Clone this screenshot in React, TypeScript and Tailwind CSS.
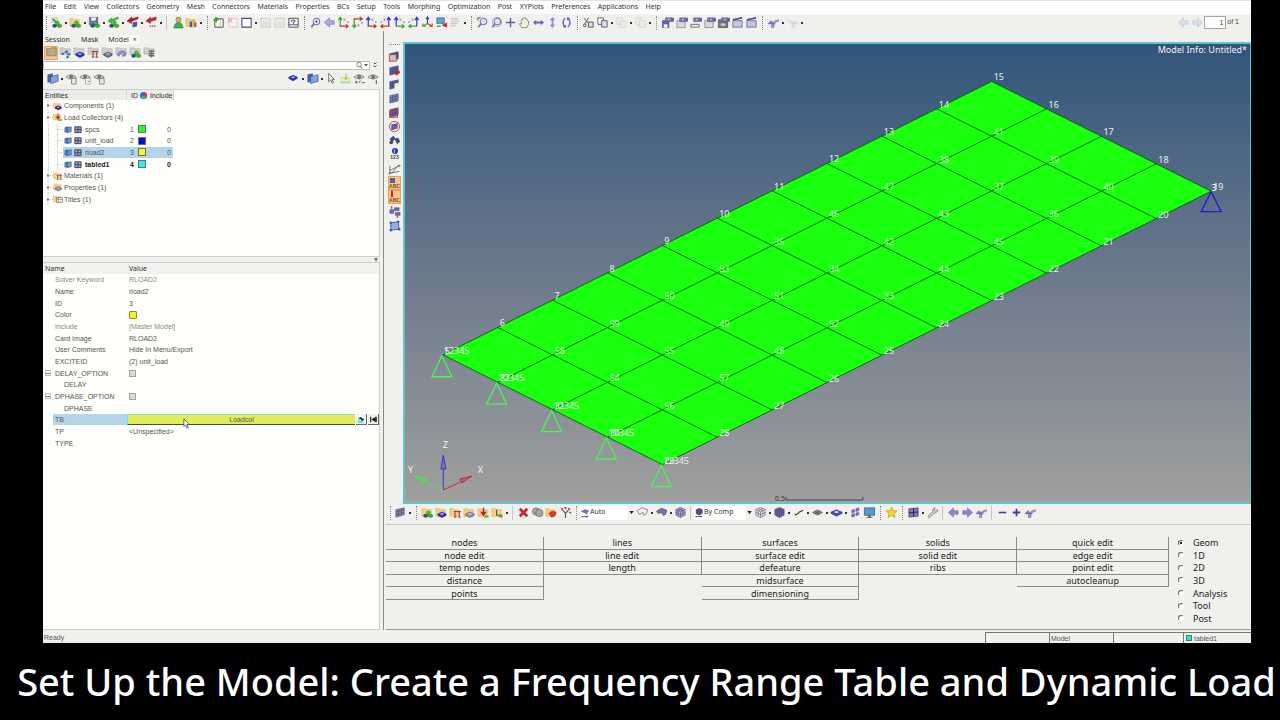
import { Fragment, ReactNode } from "react";

/* ---------- icon glyphs, all drawn on a 14x14 grid ---------- */

const Folder = () => (
  <path d="M1 3h4l1 1h5v7H1z" fill="#f3d087" stroke="#d9a94c" strokeWidth=".6" />
);
const GreyFolder = () => (
  <path d="M1 2h4l1 1h6v6H1z" fill="#cfcfcd" stroke="#a9a9a6" strokeWidth=".6" />
);
const Balls = () => (
  <g stroke="#1b6b1b" strokeWidth=".5">
    <circle cx="8" cy="7.5" r="2" fill="#44c934" />
    <ellipse cx="5" cy="10.5" rx="2.3" ry="1.8" fill="#3a3fae" />
    <ellipse cx="10.3" cy="10.6" rx="2.4" ry="1.8" fill="#3fb52e" />
  </g>
);
const Slab = ({ fill = "#2a2cc4" }: { fill?: string }) => (
  <g>
    <path d="M3 8.5l4.5-2 4.5 2v1.6l-4.5 2.4L3 10.1z" fill={fill} stroke="#1c1c70" strokeWidth=".5" />
    <path d="M5 8.6l2.5-1 2.5 1-2.5 1z" fill="#b9bbf4" />
  </g>
);
const Mesh = ({ fill = "#7d87c0" }: { fill?: string }) => (
  <g stroke="#3d4377" strokeWidth=".6">
    <path d="M2 4l9-2v7.500l-9 2.500z" fill={fill} />
    <path d="M5 3.400v7.800M8 2.700v7.800M2 6.700l9-2.400M2 9.300l9-2.400" fill="none" />
  </g>
);
const Cube = ({ fill = "#7d7fb8" }: { fill?: string }) => (
  <g stroke="#43456b" strokeWidth=".6" strokeLinejoin="round">
    <path d="M7 1.500l5 2.300v6L7 12.500l-5-2.700v-6z" fill={fill} />
    <path d="M2 3.800l5 2.400 5-2.400M7 6.200v6.300M4.500 2.600l5 2.500v6M9.500 2.600l-5 2.500v6M2 6.800L7 9.400l5-2.600" fill="none" />
  </g>
);
const Axes = ({ a, b, flip }: { a: string; b: string; flip?: boolean }) => (
  <g fill="none" strokeWidth="1.300" transform={flip ? "translate(14 0) scale(-1 1)" : undefined}>
    <path d="M3.500 11V2.500M1.500 4.500l2-3 2 3" stroke={a} />
    <path d="M3 11h9M9.500 9l2.500 2-2.500 2" stroke={b} />
    <path d="M7 2.500l2 3M9 2.500l-2 3M11 5.500l1.500 2M12.500 5.500L11 7.500" stroke="#777" strokeWidth=".6" />
  </g>
);
const Magnifier = () => (
  <g fill="none" stroke="#7175a8">
    <circle cx="8" cy="6" r="3.500" fill="#dfe1f3" strokeWidth="1.100" />
    <path d="M5.500 8.500L2.500 12" strokeWidth="1.800" />
  </g>
);
const Eye = () => (
  <g stroke="#6f6f6c" strokeWidth=".8">
    <path d="M1 5.500q5-5 11 0q-5.500 4-11 0z" fill="#dededc" />
    <circle cx="6.700" cy="5.200" r="1.800" fill="#767672" />
  </g>
);
const Undo = () => (
  <g>
    <path d="M4.500 12.500q0-7.500 8-8.500v1.600q-5.500 1.200-5 6.900z" fill="#9a9bd0" stroke="#5557a0" strokeWidth=".4" />
    <path d="M1 8.500L4 5l4.500 3.500z" fill="#7a7bbd" stroke="#5557a0" strokeWidth=".4" />
  </g>
);
const Arrow = ({ fill = "#8a8bc0", right }: { fill?: string; right?: boolean }) => (
  <path
    d="M1.500 7L7 2v3h5v4H7v3z"
    fill={fill}
    stroke="#66679a"
    strokeWidth=".6"
    transform={right ? "translate(14 0) scale(-1 1)" : undefined}
  />
);
const Camera = () => (
  <g stroke="#4c4e86" strokeWidth=".6">
    <path d="M5 2h7v4H5z" fill="#7a7dbd" />
    <circle cx="8.500" cy="4" r="1.200" fill="#e9e9fb" />
    <path d="M12 3l1.500-1v4L12 5z" fill="#4c4e86" />
  </g>
);

const glyphs: Record<string, ReactNode> = {
  newModel: (
    <g>
      <path d="M2 2h6v5H2z" fill="#e4e4e0" stroke="#9a9a96" strokeWidth=".5" />
      <path d="M3 3l5 5" stroke="#35a82a" strokeWidth="2" />
      <Balls />
    </g>
  ),
  openModel: <g><Folder /><Balls /></g>,
  save: (
    <g>
      <path d="M1.500 1.500h9v8h-9z" fill="#6a74bd" stroke="#3d4377" strokeWidth=".6" />
      <path d="M3.500 1.500h5v3.500h-5z" fill="#eef" />
      <Balls />
    </g>
  ),
  importModel: (
    <g>
      <path d="M12 1L5 4 5 2 1 5.500 5 8V6l7-3z" fill="#3cc22e" stroke="#207a18" strokeWidth=".5" />
      <Balls />
    </g>
  ),
  importGeom: (
    <g>
      <path d="M13 1L6 3 6 1 1 5.500 6 8V6l7-3z" fill="#b5232b" stroke="#6d1519" strokeWidth=".5" />
      <path d="M7 7l5-1v5l-5 1.500z" fill="#55578e" />
    </g>
  ),
  ppt: (
    <g>
      <path d="M12 1L6 3 6 1 1 5.500 6 8V6l6-2z" fill="#c4283a" stroke="#7b1a22" strokeWidth=".5" />
      <path d="M5 11h7" stroke="#555" strokeWidth="1.400" strokeDasharray="1.500 .8" />
    </g>
  ),
  user: (
    <g>
      <circle cx="8" cy="4" r="2.800" fill="#e0a877" stroke="#8a5a2d" strokeWidth=".5" />
      <path d="M5.500 3q2.500-3 5 0l-1-1.500h-3z" fill="#4c3117" />
      <path d="M3 13q.500-6 5-6t5 6z" fill="#36b14b" stroke="#1b6b2c" strokeWidth=".5" />
    </g>
  ),
  chart: (
    <g>
      <Folder />
      <path d="M5 6h2.500v6H5z" fill="#3257c4" />
      <path d="M7.500 4H10v8H7.500z" fill="#e6b72c" />
      <path d="M10 7h2.300v5H10z" fill="#7d5fb3" />
    </g>
  ),
  pagePlus: (
    <g>
      <path d="M3 3h9v9H3z" fill="#fff" stroke="#444" />
      <path d="M9 3v9" stroke="#888" strokeWidth=".6" />
      <path d="M4.500 1v6M1.500 4h6" stroke="#35a82a" strokeWidth="1.800" />
    </g>
  ),
  pageCut: (
    <g opacity=".35">
      <path d="M3 3h9v9H3z" fill="#fff" stroke="#888" />
      <path d="M2 2l5 5M7 2L2 7" stroke="#d33" strokeWidth="1.300" />
    </g>
  ),
  page: <path d="M2 2.500h10v9.500H2z" fill="#fff" stroke="#4a4f78" strokeWidth="1.200" />,
  pageFaint: (
    <g opacity=".3">
      <path d="M2 2.500h10v9.500H2z" fill="#e5e5e5" stroke="#777" />
      <path d="M4 6h6v4H4z" fill="#bbb" />
    </g>
  ),
  pageHelp: (
    <g>
      <path d="M2 2.500h10v9.500H2z" fill="#fff" stroke="#444" />
      <path d="M2 9.500h10M5 6.500V4.500h3.500v2H7V8.500" stroke="#3d4377" fill="none" />
    </g>
  ),
  zoom: <g><Magnifier /><path d="M6.500 6h3M8 4.500v3" stroke="#555" strokeWidth=".8" /></g>,
  zoomFit: <g><Magnifier /><path d="M2 2h3M2 2v3" stroke="#444" /></g>,
  zoomBack: <g><circle cx="7.500" cy="6.500" r="5" fill="none" stroke="#a4a6c9" /><Magnifier /></g>,
  back: <Arrow fill="#a9abdf" />,
  arrowL: <Arrow />,
  arrowR: <Arrow right />,
  axXY: <Axes a="#3aa62e" b="#c33" />,
  axYX: <g transform="translate(0 14) scale(1 -1)"><Axes a="#3aa62e" b="#c33" /></g>,
  axZX: <Axes a="#3437c9" b="#c33" />,
  axXZ: <Axes a="#3437c9" b="#c33" flip />,
  axZY: <Axes a="#3437c9" b="#3aa62e" />,
  axYZ: <Axes a="#3437c9" b="#3aa62e" flip />,
  axIso: (
    <g fill="none" strokeWidth="1.200">
      <path d="M7 8V1.500M5.500 3.500L7 1l1.500 2.500" stroke="#3437c9" />
      <path d="M7 8l5 3M12 8v3H9" stroke="#c33" />
      <path d="M7 8l-5 3M2 8v3h3" stroke="#3aa62e" />
    </g>
  ),
  screenSave: (
    <g>
      <path d="M2 2h8v6H2z" fill="#58a6da" stroke="#33597a" strokeWidth=".7" />
      <path d="M12 12L7 10l2-1 4-2v5z" fill="#c92a35" />
      <path d="M2 11h4" stroke="#3aa62e" strokeWidth="1.500" />
    </g>
  ),
  linesFaint: <path d="M2 3h8M2 5.500h9M2 8h7M2 10.500h5" stroke="#c9c9c6" strokeWidth="1.500" />,
  plus: <path d="M7 2v10M2 7h10" stroke="#5a5da6" strokeWidth="1.500" />,
  minus: <path d="M3 7h8" stroke="#3e4190" strokeWidth="1.700" />,
  plusBold: <path d="M7 3v8M3 7h8" stroke="#3e4190" strokeWidth="1.900" />,
  hand: (
    <path
      d="M4 12.500L1.500 8.500q1-1 2 .3V4q.9-1 1.500 0V2.500q.9-1 1.600 0V2q1-1 1.600 0v1q1-.8 1.600.2V5q1-.6 1.500.3V9l-1.500 3.500z"
      fill="#f2ede0"
      stroke="#77756c"
      strokeWidth=".8"
    />
  ),
  leftRight: <path d="M1 7l3.500-3v2h5V4L13 7l-3.500 3V8h-5v2z" fill="#6568b2" />,
  upDown: <path d="M7 1l3 3.500H8v5h2L7 13l-3-3.500h2v-5H4z" fill="#8f91cb" />,
  rotate: (
    <g fill="none" stroke="#6568b2" strokeWidth="1.400">
      <path d="M5.500 2q-4.500 5 0 10M8.500 12q4.500-5 0-10" />
      <path d="M3.500 10.500l2 1.500.500-2.500M10.500 3.500L8.500 2 8 4.500" />
    </g>
  ),
  cut: (
    <g stroke="#555">
      <path d="M2 2l6 7M7 2L3 9" fill="none" />
      <path d="M7 6.500h5v5.500H7z" fill="#d9dbee" />
      <circle cx="3" cy="10" r="1.500" fill="none" />
    </g>
  ),
  copy: (
    <g fill="#f6f6fb" stroke="#555" strokeWidth=".9">
      <path d="M2 2h6v7H2z" />
      <path d="M6 5h6v7H6z" fill="#d9dbee" />
    </g>
  ),
  copyFaint: (
    <g fill="#ededeb" stroke="#d2d2cf" strokeWidth=".9">
      <path d="M2 2h6v7H2z" />
      <path d="M6 5h6v7H6z" />
    </g>
  ),
  camSave: <g><path d="M1.500 5h7v7.500h-7z" fill="#5d63b5" stroke="#3d4377" strokeWidth=".6" /><path d="M3 9h4v3.500H3z" fill="#fff" /><Camera /></g>,
  camPage: <g><path d="M2 5h9v7.500H2z" fill="#d8d8da" stroke="#777" strokeWidth=".7" /><Camera /></g>,
  camBar: <g><path d="M2 9h9v3H2z" fill="#e7e7e7" stroke="#555" strokeWidth=".8" /><Camera /></g>,
  camDark: <g><path d="M1.500 4h10v8.500h-10z" fill="#77777c" stroke="#444" strokeWidth=".7" /><path d="M4 8h5v2.500H4z" fill="#ccc" /><Camera /></g>,
  film: <g><path d="M2 5h10v7H2z" fill="#c5c6da" stroke="#5b5c84" strokeWidth=".8" /><path d="M2 4l10-2" stroke="#4c4e86" strokeWidth="1.800" /></g>,
  undo: <Undo />,
  undoFaint: <g opacity=".2" transform="translate(14 0) scale(-1 1)"><Undo /></g>,
  pageL: <g opacity=".35"><Arrow fill="#9fd0e0" /></g>,
  pageR: <g opacity=".35"><Arrow fill="#9fd0e0" right /></g>,

  viewFolder: <path d="M2 3h3.500l1-1H12v8.500H2z" fill="#b9a98f" stroke="#80725a" strokeWidth=".7" />,
  gLinks: <g><GreyFolder /><path d="M4 8l4-2 3 3M8 6l2 6" stroke="#4d83c2" fill="none" /><g fill="#3a6fb8"><circle cx="4" cy="8.500" r="1.300" /><circle cx="8" cy="6" r="1.300" /><circle cx="11" cy="9" r="1.300" /><circle cx="9" cy="12" r="1.300" /></g></g>,
  gComp: <g><GreyFolder /><Slab /></g>,
  gMat: <g><GreyFolder /><path d="M5 6h7M6.500 6v6M10.500 6v6M5 12h3M9 12h3" stroke="#a6282e" /></g>,
  gProp: <g><GreyFolder /><Slab fill="#777774" /></g>,
  gShell: <g><GreyFolder /><path d="M2.500 10q.5-4.500 5-4.500t4.500 3-4 2.500l.5-1.500q2 0 1.800-1.200T7.500 7.500 4.500 11z" fill="#9a9bd2" stroke="#5b5c98" strokeWidth=".6" /></g>,
  gBalls: <g><GreyFolder /><Balls /></g>,
  gSystem: <g><GreyFolder /><path d="M6 5.500h6M6 8h6M6 10.500h6" stroke="#62625f" strokeWidth="1.500" /><path d="M9 4.500v8" stroke="#62625f" /></g>,
  comp: <g><Folder /><Slab /></g>,
  balls: <g><Folder /><Balls /></g>,
  mat: <g><Folder /><path d="M5 6h8M6.500 6v6M11 6v6M5.500 12H8M10 12h2.500" stroke="#a6282e" /></g>,
  prop: <g><Folder /><Slab fill="#9a9a92" /></g>,
  title: <g><Folder /><path d="M5 5h8v7H5z" fill="#f5f5ef" stroke="#555" strokeWidth=".8" /><path d="M5 7.500h8M7.500 5v7" stroke="#555" strokeWidth=".7" /></g>,
  load: <g><Folder /><path d="M7 2v7M5 7l2 3 2-3z" stroke="#c8201f" fill="#c8201f" strokeWidth="1.500" /><path d="M7.500 10h5v2.500h-5z" fill="#55c531" /></g>,
  system: <g><Folder /><path d="M6 4v6h5" stroke="#555" fill="none" strokeWidth="1.200" /><path d="M8.500 9h4v3.500h-4z" fill="#65a832" /></g>,
  meshBlue: <g><path d="M2 3l5-1v8l-5 1z" fill="#4e65b0" stroke="#2f3e80" strokeWidth=".6" /><path d="M5 5l8-2v7l-8 2.500z" fill="#82a6dc" stroke="#2f4d90" strokeWidth=".7" /></g>,
  mesh: <Mesh />,
  meshGrey: <Mesh fill="#8b8d9c" />,
  slab: <g transform="translate(-1 -3)"><Slab /></g>,
  cursor: <path d="M4 1.500v9l2.200-2 1.600 3.500 1.400-.7-1.600-3.300H10z" fill="#fff" stroke="#444" strokeWidth=".8" />,
  pick: <g><path d="M2 6h10v6H2z" fill="#f4ef9a" stroke="#b9ce7a" strokeWidth=".5" /><path d="M2 11h10" stroke="#7fd3ea" strokeWidth="1.400" /><path d="M7.500 2v6M5.500 6l2 2 2-2" stroke="#7fbd50" fill="none" /></g>,
  eyeBox: <g><Eye /><path d="M7 7h5v6H7z" fill="#e6e6e4" stroke="#777" strokeWidth=".8" /></g>,
  eyePage: <g><Eye /><path d="M7 7h5v6H7z" fill="#fff" stroke="#999" strokeWidth=".8" /><path d="M9 10h2" stroke="#666" /></g>,
  eyePlus: <g><Eye /><path d="M2 11h3M3.500 9.500v3M6 12l2-3M9 11.500h4" stroke="#555" strokeWidth=".9" /></g>,
  eyeOne: <g><Eye /><path d="M10 9v4" stroke="#555" strokeWidth="1.100" /></g>,

  maskCube: <g><Mesh fill="#4d4f78" /><path d="M1.500 5h7.500v7H1.500z" fill="#f4dede" fillOpacity=".8" stroke="#c43a46" /></g>,
  maskRed: <g><Mesh fill="#5c6098" /><path d="M5 8l4 1 3-2.500 1 3-4 3z" fill="#cf2430" /></g>,
  maskHalf: <g><Mesh fill="#5c6098" /><path d="M7 6l5-1v6l-5 1z" fill="#ededec" /></g>,
  maskRect: <g><Mesh fill="#5c6098" /><path d="M2 6h8v6H2z" fill="none" stroke="#c43a46" strokeWidth="1.200" /></g>,
  maskCircle: <g><circle cx="7" cy="7" r="5.500" fill="#f6e4e6" stroke="#c43a46" /><path d="M4 5l6-1v5l-6 1.500z" fill="#5c6098" stroke="#3d4377" strokeWidth=".6" /></g>,
  find: <g fill="#3f4779"><path d="M2 5l4-3 2 3-4 4z" /><path d="M7 5l4-1 2 4-3 3z" /><circle cx="3.500" cy="9" r="2" /></g>,
  unlink: <g fill="none" stroke="#666" strokeWidth=".9"><path d="M2 3v8l10-2M2 8l10-5M4 11l6-7" /><circle cx="12" cy="3" r="1" /><circle cx="2" cy="11" r="1" /></g>,
  arrange: <g><path d="M2 5h4v4H2zM7 3h5v3H7zM8 8h5v3H8z" fill="#6d71b4" stroke="#3d4377" strokeWidth=".6" /><path d="M4 1v3M10 11v3" stroke="#c8201f" strokeWidth="1.200" /></g>,
  patch: <g><path d="M3 4l8-1 1 8-9 1z" fill="#8fb2e2" stroke="#3c5fa5" /><g fill="#3c5fa5"><circle cx="3" cy="4" r="1.400" /><circle cx="11" cy="3" r="1.400" /><circle cx="12" cy="11" r="1.400" /><circle cx="3" cy="12" r="1.400" /></g></g>,

  redX: <path d="M3 3l8 8M11 3l-8 8" stroke="#cf1f36" strokeWidth="3" />,
  greyBalls: <g stroke="#555" strokeWidth=".6" fill="#a8a8a5"><circle cx="5.500" cy="6" r="4" /><circle cx="9" cy="7.500" r="4" /></g>,
  folderRed: <g><Folder /><path d="M4 8q4-4 8-1-1 5-5 5z" fill="#d93a24" stroke="#8c1f14" strokeWidth=".5" /></g>,
  branch: <g fill="none" stroke="#555"><path d="M7 13V8L3.500 4M7 8l3.500-4" strokeWidth="1.200" /><path d="M2 3h2M10 3h2M6 2h2M11 7h2" stroke="#c8201f" strokeWidth="1.800" /></g>,
  autoColor: <g><path d="M1.500 5l5-3 6 2-2 2-1 3-2-2z" fill="#777ab0" stroke="#4c4e86" strokeWidth=".6" /><path d="M2 12h3" stroke="#c8201f" strokeWidth="1.800" /><path d="M5 12h3" stroke="#3aa62e" strokeWidth="1.800" /><path d="M8 12h3" stroke="#3437c9" strokeWidth="1.800" /></g>,
  compColor: <g><g transform="translate(1 -1) scale(.9)"><Cube fill="#5c5e80" /></g><path d="M2 12h3" stroke="#c8201f" strokeWidth="1.800" /><path d="M5 12h3" stroke="#3aa62e" strokeWidth="1.800" /><path d="M8 12h3" stroke="#3437c9" strokeWidth="1.800" /></g>,
  wireSurf: <path d="M1.500 5l5-3 6 2-1 4-3 2-1-3-4 2z" fill="#f5f5f4" stroke="#777" strokeWidth=".9" />,
  fillSurf: <path d="M1.500 6l5-3.500 6 2-1 4.500-3 1-1-3-4 1z" fill="#7376ac" stroke="#4c4e86" strokeWidth=".8" />,
  cube: <Cube fill="#a9abdc" />,
  cubeWire: <Cube fill="#efefee" />,
  cubeFill: <Cube fill="#6467a5" />,
  line: <path d="M3 9.500l3-1 2-2 4-2" fill="none" stroke="#444" strokeWidth="1.300" />,
  flat: <g><path d="M1.500 7L7 4l5.500 3L7 10z" fill="#868683" stroke="#555" strokeWidth=".6" /><path d="M4 5.700l5.500 2.800M9.500 5.700L4 8.500" stroke="#444" strokeWidth=".6" /></g>,
  slabWide: <g><path d="M1 6.500L7 4l6 2.500v1.500l-6 3-6-3z" fill="#4548b8" stroke="#2c2e80" strokeWidth=".5" /><path d="M4 6.500L7 5.300l3 1.200L7 7.800z" fill="#e5e6fb" /></g>,
  shrink: <g fill="#7578b6" stroke="#4c4e86" strokeWidth=".5"><path d="M3 4.500l3-1v3l-3 1zM7.500 3l3-1v3l-3 1zM3 9l3-1v3l-3 1zM7.500 7.500l3-1v3l-3 1z" /></g>,
  monitor: <g><path d="M1.500 2h11v8h-11z" fill="#4f9ad6" stroke="#555" strokeWidth=".8" /><path d="M5.500 10h3v2h2v1h-7v-1h2z" fill="#666" /></g>,
  star: <path d="M7 1l1.700 4 4.300.4-3.300 2.800 1 4.300L7 10.200l-3.700 2.300 1-4.300L1 5.400 5.300 5z" fill="#f5d321" stroke="#b8931a" strokeWidth=".7" />,
  quad: <g><path d="M2 3l10-1v9l-10 1z" fill="#777ab4" stroke="#3d4377" strokeWidth=".7" /><path d="M7 2.500v9M2 7.500l10-1" stroke="#25294f" /></g>,
  wrench: <path d="M2 11l5-5q-.5-3.500 3-4.200L9 4l1.500 1.200 2-1.700q.5 3.500-3.500 4L4 12.500q-1.800.3-2-1.500z" fill="#c9c9c7" stroke="#777" strokeWidth=".7" />,
};

function Glyph({ name }: { name: string }) {
  return (
    <svg viewBox="0 0 14 14" className="size-[13px] shrink-0" fill="none">
      {glyphs[name]}
    </svg>
  );
}

function IconButton({ name, active }: { name: string; active?: boolean }) {
  return (
    <button
      type="button"
      aria-label={name}
      className={`flex h-[14px] w-[14px] shrink-0 items-center justify-center ${active ? "border border-[#e0ac70] bg-[#f5c48d]" : ""}`}
    >
      <Glyph name={name} />
    </button>
  );
}

const Caret = () => (
  <span className="flex w-[5px] shrink-0 justify-center">
    <span className="size-[2px] bg-[#333]" />
  </span>
);
const Grip = () => (
  <span className="flex w-[8px] shrink-0 justify-center">
    <span className="h-[14px] border-l border-dotted border-[#8b8b88]" />
  </span>
);
const Divider = () => (
  <span className="flex w-[7px] shrink-0 justify-center">
    <span className="h-[14px] border-l border-[#c6c6c3]" />
  </span>
);

/* "." caret, ":" grip, "|" divider, anything else is a glyph name */
function IconRow({ items }: { items: string }) {
  return (
    <div className="flex shrink-0 items-center">
      {items.split(" ").map((item, i) => {
        if (item === ".") return <Caret key={i} />;
        if (item === ":") return <Grip key={i} />;
        if (item === "|") return <Divider key={i} />;
        return <IconButton key={i} name={item} />;
      })}
    </div>
  );
}

const menus = [
  "File", "Edit", "View", "Collectors", "Geometry", "Mesh", "Connectors", "Materials", "Properties", "BCs",
  "Setup", "Tools", "Morphing", "Optimization", "Post", "XYPlots", "Preferences", "Applications", "Help",
];

function MenuBar() {
  return (
    <nav className="h-[14px] shrink-0 border-t border-[#e3e3df] bg-white pl-[2px] font-['Noto_Sans',sans-serif] text-[7px] text-[#333]">
      <div className="flex h-full w-[616px] items-center justify-between">
        {menus.map((m) => (
          <button key={m} type="button">{m}</button>
        ))}
      </div>
    </nav>
  );
}

function TopToolbar() {
  return (
    <div className="flex h-[17px] shrink-0 items-center">
      <span className="-mx-px flex"><Grip /></span>
      <IconRow items="newModel . openModel . save . importModel . importGeom . ppt . | user chart . : pagePlus pageCut page . pageFaint pageFaint pageHelp : zoom back axXY axYX axZX axXZ axZY axYZ axIso screenSave linesFaint . : zoomFit zoomBack plus hand leftRight upDown rotate : cut copy . copyFaint . copyFaint . : camSave camPage camBar camPage camDark film film : undo . undoFaint ." />
      <div className="ml-auto flex items-center pr-[12px] text-[7px] text-[#444]">
        <IconRow items="pageL pageR" />
        <input aria-label="Page" defaultValue="1" className="h-[13px] w-[22px] border border-[#a5a5a2] bg-white pr-[2px] text-right" />
        <span className="pl-px">of 1</span>
      </div>
    </div>
  );
}

/* ---------- model browser ---------- */

interface TreeRow {
  name: string;
  icon?: string;
  id?: number;
  swatch?: string;
  selected?: boolean;
  bold?: boolean;
}

const tree: TreeRow[] = [
  { name: "Components (1)", icon: "comp" },
  { name: "Load Collectors (4)", icon: "load" },
  { name: "spcs", id: 1, swatch: "bg-[#1fff1f]" },
  { name: "unit_load", id: 2, swatch: "bg-[#0b0bd8]" },
  { name: "rload2", id: 3, swatch: "bg-[#fdf51c]", selected: true },
  { name: "tabled1", id: 4, swatch: "bg-[#27f0ee]", bold: true },
  { name: "Materials (1)", icon: "mat" },
  { name: "Properties (1)", icon: "prop" },
  { name: "Titles (1)", icon: "title" },
];

function EntityTree() {
  return (
    <div className="h-[168px] shrink-0 border border-l-0 border-[#cfcfcc] bg-[#fefefb]">
      <table className="h-[115px] table-fixed border-collapse">
        <thead>
          <tr className="h-[10px] bg-[#ececea] text-left text-[#333]">
            <th className="w-[83px] border-r border-[#d4d4d1] p-0 pl-[2px] font-normal">Entities</th>
            <th className="w-[12px] p-0 text-right font-normal">ID</th>
            <th className="w-[10px] p-0" aria-label="Color">
              <svg viewBox="0 0 8 8" className="mx-auto size-[7px]">
                <circle cx="4" cy="4" r="4" fill="#2f62d8" />
                <path d="M4 4V0a4 4 0 0 1 3.500 6z" fill="#d93a4d" />
                <path d="M4 4l3.500 2A4 4 0 0 1 .5 6z" fill="#3dc04b" />
              </svg>
            </th>
            <th className="w-[25px] border-r border-[#d4d4d1] p-0 text-right font-normal">Include</th>
          </tr>
        </thead>
        <tbody>
          {tree.map((row) => {
            const hl = row.selected ? "bg-[#b4d4e9]" : "";
            return (
              <tr key={row.name} className={row.bold ? "font-bold text-[#222]" : ""}>
                <td className="p-0">
                  {row.icon ? (
                    <div className="flex h-[11px] items-center">
                      <svg viewBox="0 0 10 11" className="h-[11px] w-[10px]">
                        <path d="M5 0v11M5 5.500h5" stroke="#c4c4c0" strokeDasharray="1 1" fill="none" />
                        <path d="M4 4.500h2v2H4z" fill="#777" />
                      </svg>
                      <svg viewBox="0 0 14 14" className="size-[10px]">{glyphs[row.icon]}</svg>
                      <span className="whitespace-nowrap pl-px">{row.name}</span>
                    </div>
                  ) : (
                    <div className="flex h-[11px] items-center pl-[5px]">
                      <svg viewBox="0 0 15 11" className="h-[11px] w-[15px]">
                        <path d="M.5 0v11M9.500 0v11M9.500 5.500H15" stroke="#c4c4c0" strokeDasharray="1 1" fill="none" />
                      </svg>
                      <span className={`flex h-full flex-1 items-center ${hl}`}>
                        <svg viewBox="0 0 22 10" className="h-[9px] w-[20px]">
                          <path d="M2 3l3-1v5l-3 1zM4 3l5-1v5.500l-5 1z" fill="#6f9bdc" stroke="#2f4d90" strokeWidth=".7" />
                          <path d="M13 2h7v6.500h-7zM16.500 2v6.500M13 5.200h7" fill="#a5a6bd" stroke="#3a3b5c" />
                        </svg>
                        <span className="pl-[2px]">{row.name}</span>
                      </span>
                    </div>
                  )}
                </td>
                <td className={`p-0 pr-[4px] text-right ${hl}`}>{row.id}</td>
                <td className={`p-0 ${hl}`}>
                  {row.swatch && <span className={`block size-[8px] border border-[#66756a] ${row.swatch}`} />}
                </td>
                <td className={`p-0 pr-[2px] text-right ${hl}`}>{row.id && 0}</td>
              </tr>
            );
          })}
        </tbody>
      </table>
    </div>
  );
}

interface PropRow {
  name: string;
  value?: ReactNode;
  dim?: boolean;
  option?: boolean;
  child?: boolean;
}

const props: PropRow[] = [
  { name: "Solver Keyword", value: "RLOAD2", dim: true },
  { name: "Name", value: "rload2" },
  { name: "ID", value: "3" },
  { name: "Color", value: <span className="block size-[8px] rounded-[1px] border border-[#8c8a2e] bg-[#f4ee2b]" /> },
  { name: "Include", value: "[Master Model]", dim: true },
  { name: "Card Image", value: "RLOAD2" },
  { name: "User Comments", value: "Hide In Menu/Export" },
  { name: "EXCITEID", value: "(2) unit_load" },
  { name: "DELAY_OPTION", option: true },
  { name: "DELAY", child: true },
  { name: "DPHASE_OPTION", option: true },
  { name: "DPHASE", child: true },
  { name: "TB" },
  { name: "TP", value: "<Unspecified>" },
  { name: "TYPE" },
];

function LoadcolPicker() {
  return (
    <div className="relative -ml-[2px] flex h-[11px] gap-px">
      <button type="button" className="flex-1 border-b border-l border-t border-b-[#2f5f35] border-l-[#6fe0d8] border-t-[#8fdcb8] bg-[#e2eb5c] leading-[9px]">
        Loadcol
      </button>
      <button type="button" aria-label="Create" className="w-[11px] border-b border-r border-[#666] bg-[#f0f0ee]">
        <svg viewBox="0 0 11 10" className="h-[9px] w-[10px]">
          <path d="M2 5h6v4H2z" fill="#5fe0ee" />
          <path d="M3 4q3-3 4 1M5.500 4.500h3L7 6.500z" fill="#222" stroke="#222" strokeWidth=".7" />
        </svg>
      </button>
      <button type="button" aria-label="Reset" className="w-[11px] border-b border-r border-[#666] bg-[#f0f0ee]">
        <svg viewBox="0 0 11 10" className="h-[9px] w-[10px]">
          <path d="M3 2v6M9 2v6" stroke="#111" strokeWidth="1.300" />
          <path d="M8.500 2v6L4 5z" fill="#111" />
        </svg>
      </button>
      <svg viewBox="0 0 8 12" className="absolute left-[56px] top-[4px] h-[11px] w-[7px]">
        <path d="M1 .500v9l2-1.800 1.500 3.500 1.500-.7-1.500-3.300H7z" fill="#fff" stroke="#333" strokeWidth=".8" />
      </svg>
    </div>
  );
}

function PropertyTable() {
  return (
    <div className="min-h-0 flex-1 border border-l-0 border-[#cfcfcc] bg-[#fefefb]">
      <table className="h-[186px] w-full table-fixed border-collapse text-left">
        <thead>
          <tr className="h-[11px] bg-[#f1f1ef] font-['Noto_Sans',sans-serif] leading-[10px] text-[#333]">
            <th className="w-[86px] p-0 pl-[2px] font-normal">Name</th>
            <th className="p-0 font-normal">Value</th>
          </tr>
        </thead>
        <tbody>
          {props.map((p) => (
            <tr key={p.name} className={p.dim ? "text-[#8b8b88]" : ""}>
              <td className="p-0">
                <div className="flex h-[11px] items-center">
                  <span className="flex w-[10px] shrink-0 justify-center">
                    {p.option && (
                      <span className="flex size-[6px] items-center justify-center border border-[#bbb]">
                        <span className="h-px w-[4px] bg-[#777]" />
                      </span>
                    )}
                  </span>
                  <span className={`flex h-full flex-1 items-center ${p.child ? "pl-[11px]" : "pl-[2px]"} ${p.name === "TB" ? "bg-[#b4d4e9]" : ""}`}>
                    {p.option ? <label htmlFor={p.name}>{p.name}</label> : p.name}
                  </span>
                </div>
              </td>
              <td className="p-0">
                {p.option ? (
                  <input id={p.name} type="checkbox" className="block size-[7px] appearance-none border border-[#a2a29f] bg-[#d9d9d6]" />
                ) : p.name === "TB" ? (
                  <LoadcolPicker />
                ) : (
                  p.value
                )}
              </td>
            </tr>
          ))}
        </tbody>
      </table>
    </div>
  );
}

function ModelBrowser() {
  return (
    <aside className="flex w-[337px] shrink-0 flex-col text-[7px] leading-[9px] text-[#555]">
      <div className="flex h-[14px] items-end pb-px font-['Noto_Sans',sans-serif] text-[#333]">
        <button type="button" className="pl-[2px] pr-[11px]">Session</button>
        <button type="button" className="pr-[8px]">Mask</button>
        <button type="button" className="bg-[#fafaf8] px-[2px]">Model <span className="pl-[2px]">×</span></button>
      </div>
      <div className="flex h-[15px] items-center pl-px">
        <IconButton name="viewFolder" active />
        <IconRow items="gLinks gComp gMat gProp gShell gBalls gSystem" />
      </div>
      <div className="flex h-[10px] items-center">
        <div className="flex h-[9px] flex-1 items-center border border-[#bdbdba] bg-white">
          <input aria-label="Search" className="h-[7px] min-w-0 flex-1" />
          <svg viewBox="0 0 14 8" className="h-[8px] w-[14px]" fill="none" stroke="#555">
            <circle cx="4" cy="3.500" r="2.300" strokeWidth=".7" />
            <path d="M5.500 5.500L7 7.500" />
            <path d="M9 3h4l-2 2.500z" fill="#555" stroke="none" />
          </svg>
        </div>
        <svg viewBox="0 0 10 8" className="h-[8px] w-[10px]" fill="none" stroke="#555">
          <path d="M3.500 1.500l1.500 1.500 1.500-1.500M3.500 4.500L5 6l1.500-1.500" />
        </svg>
      </div>
      <div className="flex h-[19px] items-center justify-between pb-[2px] pl-[2px]">
        <IconRow items="meshBlue . eyeBox eyePage eyeBox" />
        <IconRow items="slab . meshBlue . cursor pick eyePlus eyeOne" />
      </div>
      <EntityTree />
      <div className="flex h-[5px] shrink-0 items-center justify-end pr-[2px]">
        <svg viewBox="0 0 4 4" className="size-[4px]"><path d="M0 0h4L2 4z" fill="#777" /></svg>
      </div>
      <PropertyTable />
    </aside>
  );
}

/* ---------- graphics area ---------- */

const COLS = 10;
const ROWS = 4;
const px = (i: number, j: number) => 442 + 55 * (i + j);
const py = (i: number, j: number) => 355.500 - 27.400 * i + 27.500 * j;

const nodeIds = [
  ["5", "6", "7", "8", "9", "10", "11", "12", "13", "14", "15"],
  ["32", "58", "59", "50", "53", "35", "46", "47", "38", "41", "16"],
  ["31", "54", "55", "49", "51", "34", "42", "43", "37", "39", "17"],
  ["30", "56", "57", "48", "52", "33", "44", "45", "36", "40", "18"],
  ["29", "28", "27", "26", "25", "24", "23", "22", "21", "20", "19"],
];

function Viewport() {
  const corners = [[0, 0], [COLS, 0], [COLS, ROWS], [0, ROWS]];
  return (
    <div className="min-h-0 min-w-0 flex-1 border-2 border-r border-[#5fc4cc] bg-linear-to-b from-[#30557a] via-[#6c798c] to-[#a0a09e]">
      <svg viewBox="405 44 845 459" className="size-full font-['Noto_Sans',sans-serif] text-[9px]">
        <polygon points={corners.map(([i, j]) => `${px(i, j)},${py(i, j)}`).join(" ")} fill="#1aff0d" />
        <g stroke="#0b5a10" strokeWidth=".9">
          {Array.from({ length: ROWS + 1 }, (_, j) => (
            <line key={j} x1={px(0, j)} y1={py(0, j)} x2={px(COLS, j)} y2={py(COLS, j)} />
          ))}
          {Array.from({ length: COLS + 1 }, (_, i) => (
            <line key={i} x1={px(i, 0)} y1={py(i, 0)} x2={px(i, ROWS)} y2={py(i, ROWS)} />
          ))}
        </g>
        <g fill="#e9efe9">
          {nodeIds.map((ids, j) =>
            ids.map((id, i) => (
              <text key={id} x={px(i, j) + 2} y={py(i, j) - 1} fill={i && j && i < COLS && j < ROWS ? "#c9f7c4" : undefined}>
                {id}
              </text>
            ))
          )}
        </g>
        {nodeIds.map((_, j) => (
          <Fragment key={j}>
            <path d={`M${px(0, j) - 1} ${py(0, j) + 1}l10 21h-20z`} fill="none" stroke="#4df25a" strokeWidth="1.300" />
            <text x={px(0, j) + 1} y={py(0, j) - 1} fill="#e9efe9">12345</text>
          </Fragment>
        ))}
        <path d="M1212 192l10 20h-20z" fill="none" stroke="#1c1ccc" strokeWidth="1.300" />
        <text x="1212" y="191" fill="#fff">3</text>

        <g fill="none">
          <path d="M442.500 491V470" stroke="#3a3ab8" />
          <path d="M442.500 456l-2.500 14h5z" stroke="#3232c8" fill="#3232c8" fillOpacity=".3" />
          <path d="M442.500 491l-17-8" stroke="#4ae64a" />
          <path d="M414 477l9 7 3-4z" stroke="#4ae64a" fill="#4ae64a" fillOpacity=".5" />
          <path d="M442.500 491l17-8" stroke="#c8283c" />
          <path d="M471 477l-12 3 2 4z" stroke="#c8283c" fill="#c8283c" fillOpacity=".5" />
        </g>
        <g fill="#f2f2f2">
          <text x="442" y="449">Z</text>
          <text x="407" y="474">Y</text>
          <text x="477" y="474">X</text>
        </g>
        <text x="775" y="502" fontSize="7" fill="#333">0.5</text>
        <path d="M786 498v3h77v-3" fill="none" stroke="#444" />
        <text x="1248" y="53" textAnchor="end" fill="#f2f2f2">Model Info: Untitled*</text>
      </svg>
    </div>
  );
}

function SideTools() {
  return (
    <div className="flex w-[17px] shrink-0 flex-col items-center pt-[2px]">
      <span className="mb-[4px] w-[11px] border-t border-dotted border-[#888]" />
      {["maskCube", "maskRed", "maskHalf", "mesh", "maskRect", "maskCircle", "find"].map((n) => (
        <IconButton key={n} name={n} />
      ))}
      <button type="button" className="flex h-[15px] flex-col items-center text-[5px] font-bold leading-[6px] text-[#444]">
        <span className="mt-px flex size-[6px] items-center justify-center rounded-full bg-[#2a2cc4] text-white">i</span>
        123
      </button>
      <IconButton name="unlink" />
      <button type="button" className="relative flex h-[14px] w-[13px] items-end justify-center border border-[#d9a364] bg-[#f5c48d] text-[5px] font-bold leading-[6px] text-[#7a4c1a]">
        <span className="absolute left-px top-px size-[5px] bg-[#5c6098]" />
        ABC
      </button>
      <button type="button" className="relative flex h-[14px] w-[13px] items-end justify-center border border-[#d9a364] bg-[#f5c48d] text-[5px] font-bold leading-[6px] text-[#7a4c1a]">
        <span className="absolute left-[2px] top-0 h-[6px] w-[2px] bg-[#c8201f]" />
        ABC
      </button>
      <IconButton name="arrange" />
      <IconButton name="patch" />
    </div>
  );
}

function Combo({ icon, label, width }: { icon: string; label: string; width: string }) {
  return (
    <>
      <div className={`flex h-[14px] items-center bg-white ${width}`}>
        <svg viewBox="0 0 14 14" className="size-[10px] shrink-0">{glyphs[icon]}</svg>
        <select aria-label={icon} className="min-w-0 flex-1 appearance-none text-[7px] text-[#333]">
          <option>{label}</option>
        </select>
      </div>
      <svg viewBox="0 0 6 4" className="mx-px h-[3px] w-[5px]"><path d="M0 0h6L3 4z" fill="#222" /></svg>
    </>
  );
}

function BottomToolbar() {
  return (
    <div className="flex h-[21px] shrink-0 items-center overflow-hidden border-b border-[#cbcbc8] pb-[3px] font-['Noto_Sans',sans-serif]">
      <span className="-mr-px flex"><Grip /></span>
      <IconRow items="meshGrey . : balls comp mat prop load system . | redX greyBalls folderRed branch :" />
      <Combo icon="autoColor" label="Auto" width="w-[48px]" />
      <IconRow items="wireSurf . fillSurf . cube |" />
      <Combo icon="compColor" label="By Comp" width="w-[52px]" />
      <IconRow items="cubeWire . cubeFill . line . flat . slabWide . shrink monitor : star : quad . wrench | arrowL arrowR undo | minus plusBold undo" />
    </div>
  );
}

const commands = [
  ["nodes", "node edit", "temp nodes", "distance", "points"],
  ["lines", "line edit", "length"],
  ["surfaces", "surface edit", "defeature", "midsurface", "dimensioning"],
  ["solids", "solid edit", "ribs"],
  ["quick edit", "edge edit", "point edit", "autocleanup"],
];

const pages = ["Geom", "1D", "2D", "3D", "Analysis", "Tool", "Post"];

function CommandPanel() {
  return (
    <div className="grid h-[105px] shrink-0 grid-cols-[158fr_158fr_158fr_158fr_152fr_82px] border-b border-[#999994] pb-[4px] pt-[12px] font-['Noto_Sans',sans-serif] text-[9px] leading-[11px] text-[#222]">
      {commands.map((col) => (
        <div key={col[0]} className="grid grid-rows-7">
          {col.map((c) => (
            <button key={c} type="button" className="border-b border-r border-[#8d8d88]">{c}</button>
          ))}
        </div>
      ))}
      <div className="grid grid-rows-7">
        {pages.map((p) => (
          <label key={p} className="flex items-center gap-[9px] pb-px pl-[9px]">
            <input
              type="radio"
              name="page"
              defaultChecked={p === "Geom"}
              className="size-[6px] appearance-none rounded-full border border-white border-l-[#666] border-t-[#666] bg-white checked:bg-[radial-gradient(#222_30%,#fff_40%)]"
            />
            {p}
          </label>
        ))}
      </div>
    </div>
  );
}

function StatusBar() {
  const cell = "flex items-center border-l border-t border-[#77776f] pl-px";
  return (
    <footer className="flex h-[11px] shrink-0 text-[7px] leading-[9px] text-[#555]">
      <span className="flex-1 pl-px pt-px">Ready</span>
      <span className={`w-[64px] ${cell}`} />
      <span className={`w-[64px] ${cell}`}>Model</span>
      <span className={`w-[70px] ${cell}`} />
      <span className={`w-[68px] gap-[2px] ${cell}`}>
        <span className="ml-px size-[6px] border border-[#3a7f80] bg-[#27e0e0]" />
        tabled1
      </span>
    </footer>
  );
}

export default function App() {
  return (
    <div className="flex h-screen flex-col overflow-hidden bg-black">
      <div className="ml-[43px] mr-[29px] flex min-h-0 flex-1 flex-col bg-[#f0f0ed] font-['Liberation_Sans',sans-serif]">
        <MenuBar />
        <TopToolbar />
        <div className="flex min-h-0 flex-1 pb-[2px]">
          <ModelBrowser />
          <main className="ml-[3px] flex min-w-0 flex-1 flex-col border-l border-[#8d8d88] pl-[2px]">
            <div className="flex min-h-0 flex-1 pt-[11px]">
              <SideTools />
              <Viewport />
            </div>
            <BottomToolbar />
            <CommandPanel />
          </main>
        </div>
        <StatusBar />
      </div>
      <div className="flex h-[77px] shrink-0 items-center justify-center whitespace-nowrap pl-[13px] font-['Noto_Sans',sans-serif] text-[38px] font-medium text-white">
        Set Up the Model: Create a Frequency Range Table and Dynamic Load
      </div>
    </div>
  );
}
